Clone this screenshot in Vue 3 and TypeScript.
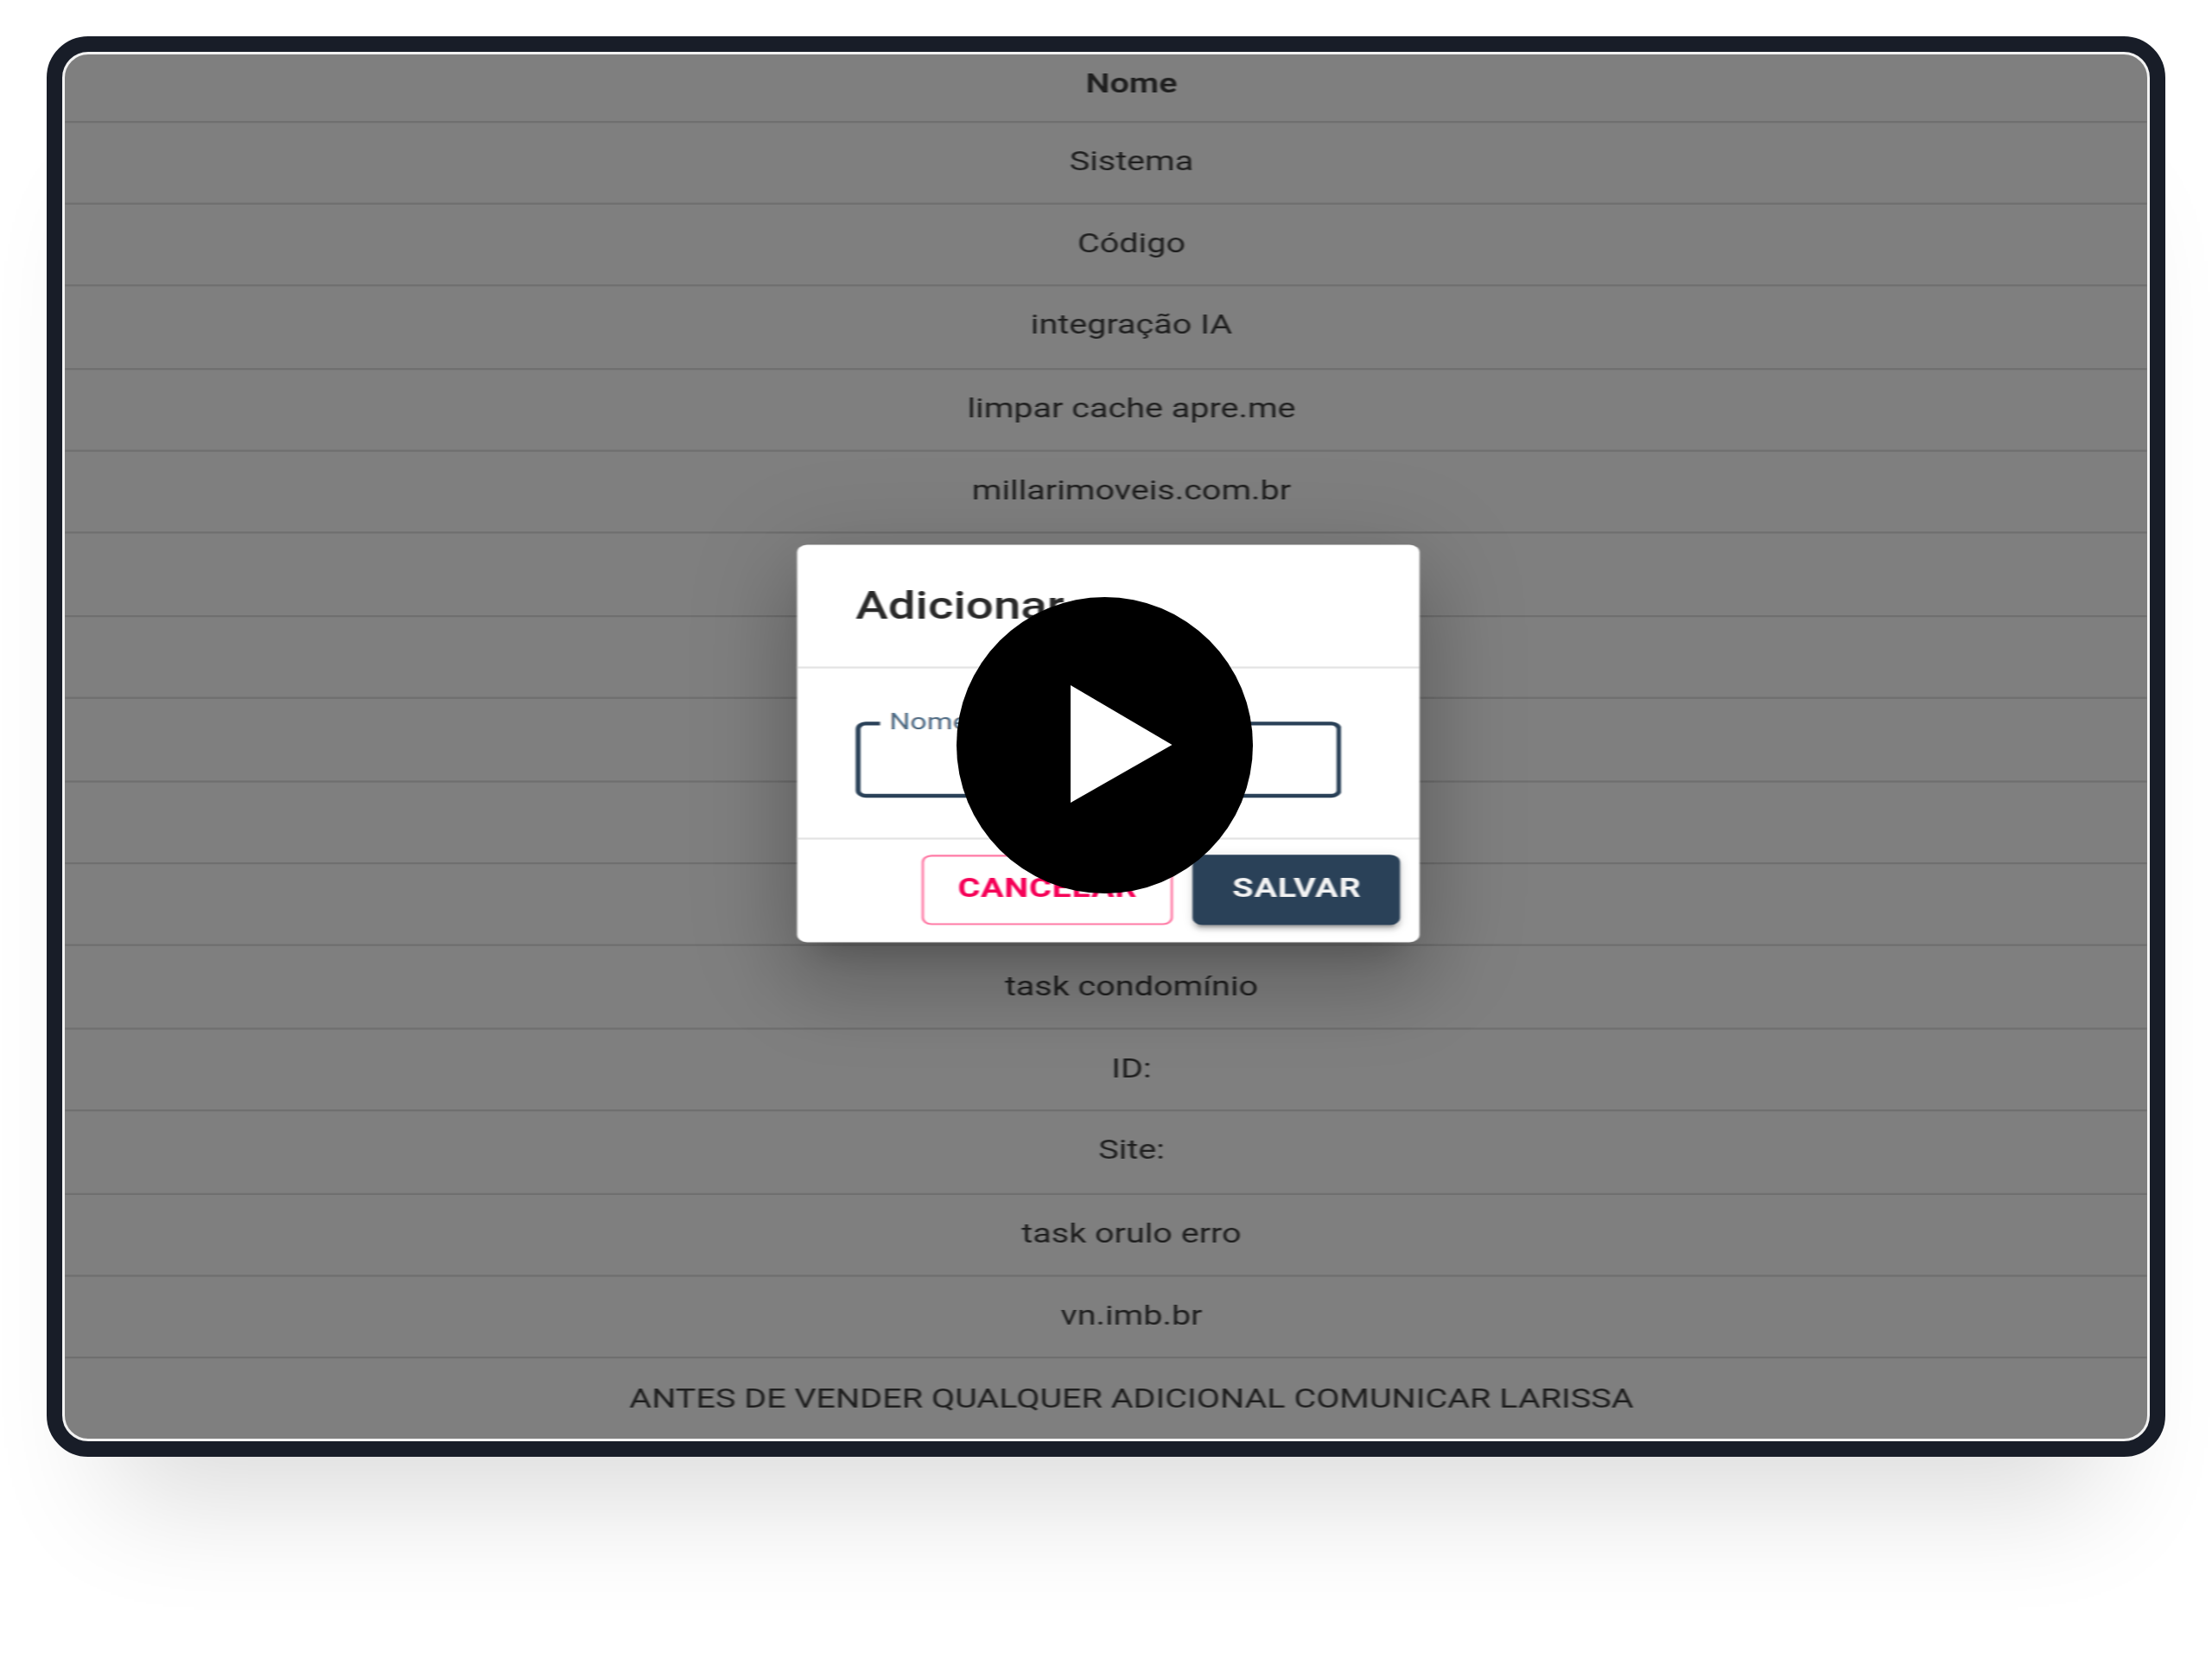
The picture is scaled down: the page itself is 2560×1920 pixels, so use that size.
<script setup lang="ts">
const rows: string[] = [
  'Sistema', 'Código', 'integração IA', 'limpar cache apre.me', 'millarimoveis.com.br',
  '', '', '', '', '', 'task condomínio', 'ID:', 'Site:', 'task orulo erro', 'vn.imb.br',
  'ANTES DE VENDER QUALQUER ADICIONAL COMUNICAR LARISSA'
]
</script>

<template>
  <div class="page">
    <div class="device">
      <div class="screen">
        <div class="viewport">
          <div class="table">
            <div class="row head">Nome</div>
            <div v-for="(r, i) in rows" :key="i" class="row">{{ r }}</div>
          </div>
          <div class="dialog">
            <div class="dialog-title">Adicionar</div>
            <div class="dialog-body">
              <div class="field">
                <span class="field-label">Nome</span>
              </div>
            </div>
            <div class="dialog-actions">
              <button class="btn outline">Cancelar</button>
              <button class="btn solid">Salvar</button>
            </div>
          </div>
        </div>
      </div>
    </div>
    <svg class="play" viewBox="0 0 343 343" aria-label="play">
      <circle cx="171.5" cy="171.5" r="171.5" fill="#000" />
      <polygon points="132,102 249.5,171 132,238" fill="#fff" />
    </svg>
  </div>
</template>

<style>
html, body { margin: 0; background: #fff; }
</style>

<style scoped>
.page {
  position: relative;
  width: 2560px;
  height: 1920px;
  padding: 42px 54px 0;
  box-sizing: border-box;
  background: #fff;
  overflow: hidden;
  font-family: Roboto, "Liberation Sans", sans-serif;
}
.device {
  height: 1644px;
  box-sizing: border-box;
  border: 18px solid #181d28;
  border-radius: 48px;
  background: #181d28;
  box-shadow: 0 125px 130px -75px rgba(0, 0, 0, 0.14), 0 0 60px rgba(0, 0, 0, 0.006);
}
.screen {
  height: 100%;
  box-sizing: border-box;
  border: 3px solid #f2f2f2;
  border-radius: 30px;
  overflow: hidden;
  background: #7f7f7f;
}
.viewport {
  position: relative;
  width: 853.1px;
  height: 728px;
  transform: scale(2.825, 2.2);
  transform-origin: 0 0;
  filter: blur(0.35px);
}
.table {
  display: flex;
  flex-direction: column;
  font-size: 14px;
  color: #1f1f1f;
}
.row {
  height: 43.4px;
  flex: none;
  box-sizing: border-box;
  display: flex;
  align-items: center;
  justify-content: center;
  padding-left: 20.9px;
  padding-bottom: 2.2px;
  border-bottom: 1px solid #6f6f6f;
}
.row.head {
  height: 35.5px;
  padding-bottom: 4px;
  font-weight: 600;
}
.row:last-child { border-bottom: 0; }
.dialog {
  position: absolute;
  left: 300.4px;
  top: 258px;
  width: 254.4px;
  height: 208.6px;
  background: #fff;
  border-radius: 4px;
  box-shadow: 0 11px 15px -7px rgba(0, 0, 0, 0.2), 0 24px 38px 3px rgba(0, 0, 0, 0.14), 0 9px 46px 8px rgba(0, 0, 0, 0.12);
  display: flex;
  flex-direction: column;
}
.dialog-title {
  height: 65px;
  flex: none;
  box-sizing: border-box;
  padding: 11.7px 23.6px 0;
  font-size: 20px;
  font-weight: 500;
  line-height: 40px;
  color: #2a2a2a;
  border-bottom: 1px solid #e3e3e3;
}
.dialog-body {
  height: 89.5px;
  flex: none;
  box-sizing: border-box;
  padding: 27.8px 0 0 23.6px;
  border-bottom: 1px solid #e3e3e3;
}
.field {
  position: relative;
  width: 198.6px;
  height: 40.7px;
  box-sizing: border-box;
  border: 2px solid #2a4158;
  border-radius: 4px;
}
.field-label {
  position: absolute;
  left: 7.6px;
  top: -8.9px;
  padding: 0 4.2px;
  background: #fff;
  font-size: 12px;
  line-height: 14px;
  color: #4f6a82;
}
.dialog-actions {
  display: flex;
  justify-content: flex-end;
  gap: 8.1px;
  padding: 8.1px 7.7px 0 0;
}
.btn {
  height: 37.3px;
  box-sizing: border-box;
  border-radius: 4px;
  padding: 0 0 1.5px;
  font-family: inherit;
  font-size: 14px;
  font-weight: 700;
  letter-spacing: 0.25px;
  text-transform: uppercase;
}
.outline {
  width: 103.4px;
  background: #fff;
  color: #f50057;
  border: 1px solid #ff7ba6;
}
.solid {
  width: 84.7px;
  background: #2a4158;
  color: #f2f2f2;
  border: 0;
  box-shadow: 0 3px 1px -2px rgba(0, 0, 0, 0.2), 0 2px 2px 0 rgba(0, 0, 0, 0.14), 0 1px 5px 0 rgba(0, 0, 0, 0.12);
}
.play {
  position: absolute;
  left: 1107px;
  top: 691px;
  width: 343px;
  height: 343px;
}
</style>
